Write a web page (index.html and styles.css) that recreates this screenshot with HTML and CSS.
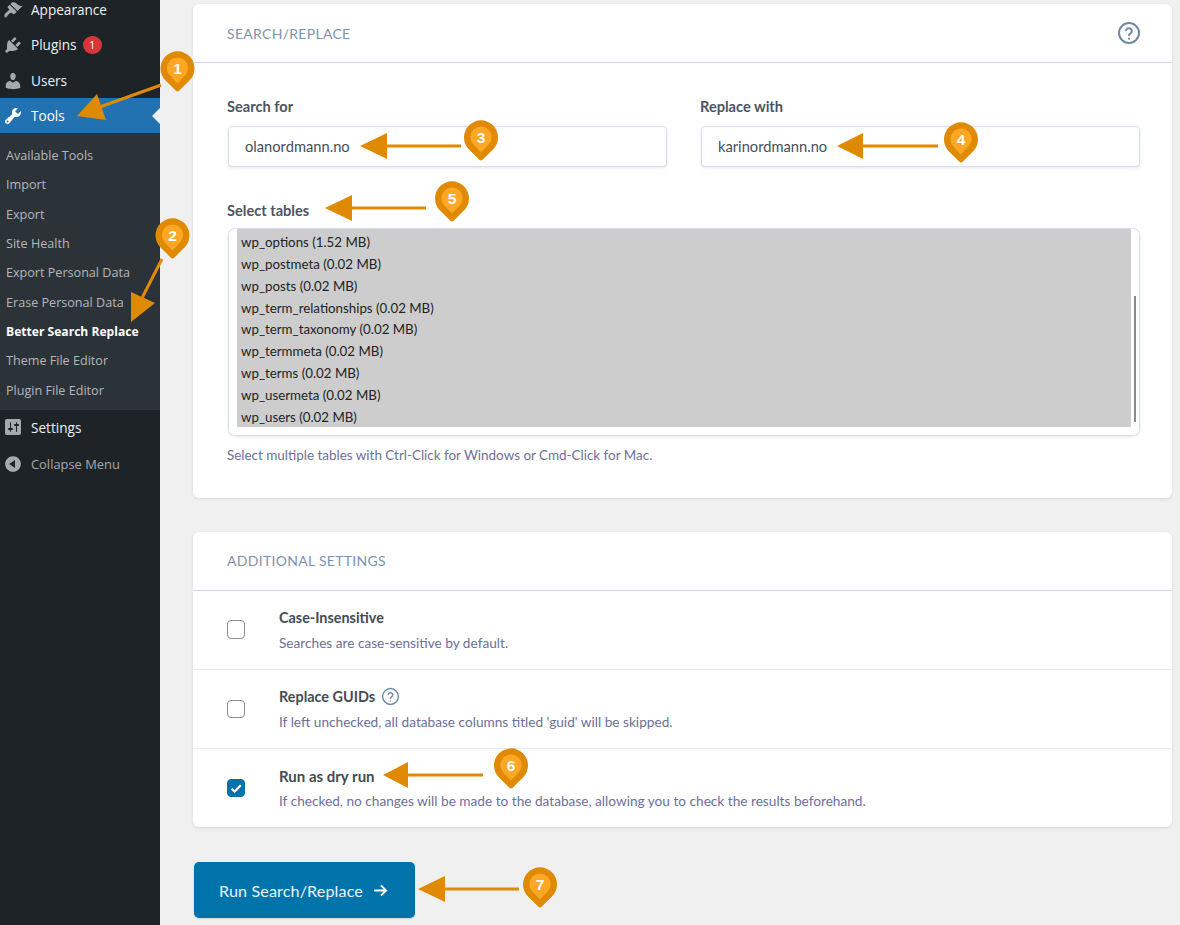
FILE: index.html
```html
<!DOCTYPE html>
<html lang="en">
<head>
<meta charset="utf-8">
<title>Better Search Replace</title>
<link rel="stylesheet" href="styles.css">
</head>
<body>
<div class="page">
  <nav class="sidebar">
    <ul class="menu">
      <li class="menu-item"><svg class="menu-icon" viewBox="0 0 20 20"><path d="M14.48 11.06L7.41 3.99l1.5-1.5c.5-.56 2.3-.47 3.51.32 1.21.8 1.43 1.28 2.91 2.1 1.18.64 2.45 1.26 4.45.85zm-.71.71L6.7 4.7 4.93 6.47c-.39.39-.39 1.02 0 1.41l1.06 1.06c.39.39.39 1.03 0 1.42-.6.6-1.43 1.11-2.21 1.69-.35.26-.7.53-1.01.84-1.36 1.36-1.88 3.23-.82 4.28.39.39 1.02.39 1.42 0 .3-.3 1.2-2.1 2.6-3.2.7-.5 1.3-.9 2-1.2.39-.17 1 .1 1.4.5l.7.7c.39.39 1.02.39 1.41 0z"/></svg><span>Appearance</span></li>
      <li class="menu-item"><svg class="menu-icon" viewBox="0 0 20 20"><path d="M13.11 4.36L9.87 7.6 8 5.73l3.24-3.24c.35-.34 1.05-.2 1.56.32.52.51.66 1.21.31 1.55zm-8 1.77l.91-1.12 9.01 9.01-1.19.84c-.71.71-2.63 1.16-3.82 1.16H6.14L4.9 17.26c-.59.59-1.54.59-2.12 0-.59-.58-.59-1.53 0-2.12l1.24-1.24v-3.88c0-1.13.4-3.19 1.09-3.89zm7.26 3.97l3.24-3.24c.34-.35 1.04-.21 1.55.31.52.51.66 1.21.31 1.55l-3.24 3.25z"/></svg><span>Plugins</span><span class="badge">1</span></li>
      <li class="menu-item"><svg class="menu-icon" viewBox="0 0 20 20"><path d="M10 9.25c-2.27 0-2.73-3.44-2.73-3.44C7 4.02 7.82 2 9.97 2c2.16 0 2.98 2.02 2.71 3.81 0 0-.41 3.44-2.68 3.44zm0 2.57L12.72 10c2.39 0 4.52 2.33 4.52 4.53v2.49s-3.65 1.13-7.24 1.13c-3.65 0-7.24-1.13-7.24-1.13v-2.49c0-2.25 1.94-4.48 4.47-4.48z"/></svg><span>Users</span></li>
      <li class="menu-item is-current"><svg class="menu-icon" viewBox="0 0 20 20"><path d="M16.68 9.77c-1.34 1.34-3.3 1.67-4.95.99l-5.41 6.52c-.99.99-2.59.99-3.58 0s-.99-2.59 0-3.58l6.52-5.41c-.68-1.65-.35-3.61.99-4.95 1.28-1.28 3.12-1.62 4.72-1.06l-2.89 2.89 2.82 2.82 2.86-2.87c.53 1.58.18 3.39-1.08 4.65zM3.81 16.21c.4.39 1.04.39 1.43 0 .4-.4.4-1.04 0-1.43-.39-.4-1.03-.4-1.43 0-.39.39-.39 1.03 0 1.43z"/></svg><span>Tools</span></li>
    </ul>
    <ul class="submenu">
      <li>Available Tools</li>
      <li>Import</li>
      <li>Export</li>
      <li>Site Health</li>
      <li>Export Personal Data</li>
      <li>Erase Personal Data</li>
      <li class="is-active">Better Search Replace</li>
      <li>Theme File Editor</li>
      <li>Plugin File Editor</li>
    </ul>
    <ul class="menu">
      <li class="menu-item menu-item-tall"><svg class="menu-icon" viewBox="0 0 20 20"><path d="M18 16V4c0-1.1-.9-2-2-2H4c-1.1 0-2 .9-2 2v12c0 1.1.9 2 2 2h12c1.1 0 2-.9 2-2zM8 11h1c.55 0 1 .45 1 1s-.45 1-1 1H8v1.5c0 .28-.22.5-.5.5s-.5-.22-.5-.5V13H6c-.55 0-1-.45-1-1s.45-1 1-1h1V5.5c0-.28.22-.5.5-.5s.5.22.5.5V11zm5-2h-1c-.55 0-1-.45-1-1s.45-1 1-1h1V5.5c0-.28.22-.5.5-.5s.5.22.5.5V7h1c.55 0 1 .45 1 1s-.45 1-1 1h-1v5.5c0 .28-.22.5-.5.5s-.5-.22-.5-.5V9z"/></svg><span>Settings</span></li>
      <li class="menu-item menu-item-tall is-muted"><svg class="menu-icon" viewBox="0 0 20 20"><path d="M10 2.16c4.33 0 7.84 3.51 7.84 7.84s-3.51 7.84-7.84 7.84S2.16 14.33 2.16 10 5.71 2.16 10 2.16zm2 11.72V6.12L6.18 9.97z"/></svg><span>Collapse Menu</span></li>
    </ul>
  </nav>

  <main class="content">
    <section class="card card-search">
      <header class="card-head">
        <h2>SEARCH/REPLACE</h2>
        <svg class="help help-lg" viewBox="0 0 24 24"><circle cx="12" cy="12" r="10"/><path d="M9 9.2a3 3 0 0 1 5.8 1c0 2-2.8 2.4-2.8 4.1"/><path d="M12 17.6v.2"/></svg>
      </header>
      <div class="card-body">
        <div class="fields">
          <div class="field">
            <label>Search for</label>
            <div class="input">olanordmann.no</div>
          </div>
          <div class="field">
            <label>Replace with</label>
            <div class="input">karinordmann.no</div>
          </div>
        </div>
        <label class="tables-label">Select tables</label>
        <div class="listbox">
          <ul class="options">
            <li>wp_options (1.52 MB)</li>
            <li>wp_postmeta (0.02 MB)</li>
            <li>wp_posts (0.02 MB)</li>
            <li>wp_term_relationships (0.02 MB)</li>
            <li>wp_term_taxonomy (0.02 MB)</li>
            <li>wp_termmeta (0.02 MB)</li>
            <li>wp_terms (0.02 MB)</li>
            <li>wp_usermeta (0.02 MB)</li>
            <li>wp_users (0.02 MB)</li>
          </ul>
          <div class="scrolltrack"><div class="scrollthumb"></div></div>
        </div>
        <p class="hint">Select multiple tables with Ctrl-Click for Windows or Cmd-Click for Mac.</p>
      </div>
    </section>

    <section class="card card-settings">
      <header class="card-head card-head-settings">
        <h2>ADDITIONAL SETTINGS</h2>
      </header>
      <div class="setting">
        <span class="check"></span>
        <div class="setting-text">
          <h3>Case-Insensitive</h3>
          <p>Searches are case-sensitive by default.</p>
        </div>
      </div>
      <div class="setting">
        <span class="check"></span>
        <div class="setting-text">
          <h3>Replace GUIDs <svg class="help help-sm" viewBox="0 0 24 24"><circle cx="12" cy="12" r="10"/><path d="M9 9.2a3 3 0 0 1 5.8 1c0 2-2.8 2.4-2.8 4.1"/><path d="M12 17.6v.2"/></svg></h3>
          <p>If left unchecked, all database columns titled 'guid' will be skipped.</p>
        </div>
      </div>
      <div class="setting">
        <span class="check is-checked"><svg viewBox="0 0 20 20"><path d="M4.5 10.5l3.6 3.4 7.4-7.6"/></svg></span>
        <div class="setting-text">
          <h3 class="dry-run">Run as dry run</h3>
          <p>If checked, no changes will be made to the database, allowing you to check the results beforehand.</p>
        </div>
      </div>
    </section>

    <button class="run-btn" type="button">Run Search/Replace <svg viewBox="0 0 20 20"><path d="M2.5 10h14M10.5 4l6 6-6 6"/></svg></button>
  </main>

  <svg class="annotations" viewBox="0 0 1180 925" aria-hidden="true">
    <defs>
      <g id="pin">
        <path class="pin-outer" d="M-12.2,12.2 A17,17 0 1 1 12.2,12.2 L1.6,22.8 Q0,24.2 -1.6,22.8 Z"/>
        <path class="pin-inner" d="M-7.6,7.4 A10.6,10.6 0 1 1 7.6,7.4 L0,15.5 Z"/>
      </g>
    </defs>
    <g class="arrows">
      <path d="M161,85 L100,107"/><polygon points="77,116 97,94 106,120"/>
      <path d="M162,259 L142,298"/><polygon points="131,292 155,303 131,322"/>
      <path d="M461,146 L387,146"/><polygon points="360,146 387,133 387,159"/>
      <path d="M938,146 L863,146"/><polygon points="837,146 863,133 863,159"/>
      <path d="M426,208 L352,208"/><polygon points="325,208 352,195 352,221"/>
      <path d="M483,775 L408,775"/><polygon points="383,775 408,762 408,788"/>
      <path d="M519,889 L445,889"/><polygon points="418,889 445,876 445,902"/>
    </g>
    <use href="#pin" x="177.5" y="68"/><text x="177.5" y="73.5">1</text>
    <use href="#pin" x="172.5" y="235"/><text x="172.5" y="240.5">2</text>
    <use href="#pin" x="481" y="137"/><text x="481" y="142.5">3</text>
    <use href="#pin" x="961" y="139"/><text x="961" y="144.5">4</text>
    <use href="#pin" x="452" y="198"/><text x="452" y="203.5">5</text>
    <use href="#pin" x="511" y="765"/><text x="511" y="770.5">6</text>
    <use href="#pin" x="540" y="884"/><text x="540" y="889.5">7</text>
  </svg>
</div>
</body>
</html>
```
FILE: styles.css
```css
* { box-sizing: border-box; }
html, body { margin: 0; padding: 0; height: 100%; overflow: hidden; }
body { background: #f0f0f1; font-family: "Lato", "Liberation Sans", sans-serif; }
ul { list-style: none; margin: 0; padding: 0; }
h2, h3, p { margin: 0; font-weight: normal; }

.page { position: relative; display: flex; width: 1180px; height: 925px; overflow: hidden; }

/* Sidebar */
.sidebar { flex: 0 0 160px; background: #1d2327; font-family: "Open Sans", sans-serif; margin-top: -7px; height: 932px; }
.menu-item { display: flex; align-items: center; height: 35px; color: #f0f0f1; font-size: 13.6px; position: relative; }
.menu-item:nth-child(-n+2) { padding-bottom: 1.5px; }
.menu-item-tall { height: 36px; }
.menu-item-tall.is-muted { padding-bottom: 0; }
.menu-icon { flex: 0 0 20px; width: 20px; height: 20px; margin: 0 8px 0 3px; fill: #a7aaad; }
.is-current { background: #2271b1; color: #fff; }
.is-current .menu-icon { fill: #fff; }
.is-current::after { content: ""; position: absolute; right: 0; top: 50%; margin-top: -8px; border: 8px solid transparent; border-right-color: #f0f0f1; border-left: 0; }
.is-muted { color: #a7aaad; font-size: 12.9px; }
.badge { display: inline-flex; align-items: center; justify-content: center; width: 18.5px; height: 18.5px; margin-left: 6.5px; border-radius: 50%; background: #d63638; color: #fff; font-size: 10.5px; }
.submenu { background: #2c3338; padding: 8px 0 5px; }
.submenu li { height: 29.35px; line-height: 29px; padding-left: 6px; color: #c3c4c7; opacity: .9; font-size: 12.6px; }
.submenu .is-active { color: #fff; opacity: 1; font-weight: 700; font-size: 12.1px; }

/* Content */
.content { flex: 1; padding: 4px 8px 0 33px; min-width: 0; }
.card { background: #fff; border-radius: 6px; box-shadow: 0 1px 3px rgba(30, 50, 80, .12); }
.card-search { height: 494px; }
.card-settings { height: 295px; margin-top: 34px; }
.card-head { display: flex; align-items: center; justify-content: space-between; height: 59px; padding: 0 33px 0 34px; border-bottom: 1px solid #c9d9ef; }
.card-head h2 { font-size: 14px; letter-spacing: .3px; color: #7c93ad; }
.card-head-settings { padding-bottom: 2px; }
.help { fill: none; stroke: #6f8aa5; stroke-width: 2; stroke-linecap: round; }
.help-lg { width: 24px; height: 24px; margin-right: -2px; }
.help-sm { width: 19px; height: 19px; vertical-align: -4px; margin-left: 2px; stroke-width: 1.8; }

.card-body { padding: 35px 32px 0 34px; }
.fields { display: flex; gap: 33px; }
.field { flex: 1; }
.field label, .tables-label { display: block; font-size: 14.6px; font-weight: 700; color: #4b5563; line-height: 18px; }
.input { margin: 10px 0 0 1px; height: 41px; line-height: 39px; padding-left: 16px; border: 1px solid #d6e0f2; border-radius: 4px; background: #fff; box-shadow: 0 1px 3px rgba(40, 60, 100, .12); font-size: 14.7px; color: #454f5b; }
.tables-label { margin-top: 35px; }
.listbox { display: flex; margin: 8px 0 0 1px; height: 208px; padding: 0 0 0 8px; border: 1px solid #d6e0f2; border-radius: 7px; box-shadow: 0 1px 3px rgba(40, 60, 100, .12); }
.options { flex: 1; height: 198px; padding-top: 2px; background: #cdcdcd; }
.options li { height: 21.85px; line-height: 22px; padding-left: 4px; font-size: 13.3px; color: #222; }
.scrolltrack { flex: 0 0 8px; padding: 67px 0 0 3px; }
.scrollthumb { width: 2px; height: 126px; background: #8a8a8a; }
.hint { margin-top: 10px; font-size: 13.45px; color: #6d6f9a; line-height: 18px; }

.setting { display: flex; align-items: center; height: 79px; padding: 0 33px 0 33.5px; border-top: 1px solid #e6ebf3; }
.card-head + .setting { border-top: 0; height: 78px; padding-bottom: 1px; }
.check { flex: 0 0 18.5px; width: 18.5px; height: 18.5px; margin-right: 34px; border: 1.5px solid #8c8f94; border-radius: 4px; background: #fff; display: flex; }
.check.is-checked { background: #0073aa; border-color: #0073aa; }
.check svg { width: 100%; height: 100%; fill: none; stroke: #fff; stroke-width: 2.6; }
.setting-text h3 { font-size: 14.4px; font-weight: 700; color: #444b55; line-height: 20px; }
.setting-text h3.dry-run { font-size: 15px; }
.setting-text p { margin-top: 6px; font-size: 13.65px; color: #6d6f9a; line-height: 18px; }

.run-btn { display: flex; align-items: center; gap: 9px; margin: 35px 0 0 1px; width: 221px; height: 56px; padding: 0 0 0 25px; border: 0; border-radius: 5px; background: #0073aa; color: #e8f3f8; font-family: "Lato", sans-serif; font-size: 16.2px; letter-spacing: .1px; box-shadow: 0 1px 2px rgba(0, 0, 0, .12); }
.run-btn svg { width: 17px; height: 17px; fill: none; stroke: #fff; stroke-width: 2.3; }

/* Annotation overlay */
.annotations { position: absolute; left: 0; top: 0; width: 1180px; height: 925px; pointer-events: none; }
.arrows path { fill: none; stroke: #e08a03; stroke-width: 3; }
.arrows polygon { fill: #e08a03; }
.pin-outer { fill: #e08a03; }
.pin-inner { fill: #fda724; }
.annotations text { font-family: "Liberation Sans", sans-serif; font-size: 15.5px; font-weight: 700; fill: #fff; text-anchor: middle; }
```
